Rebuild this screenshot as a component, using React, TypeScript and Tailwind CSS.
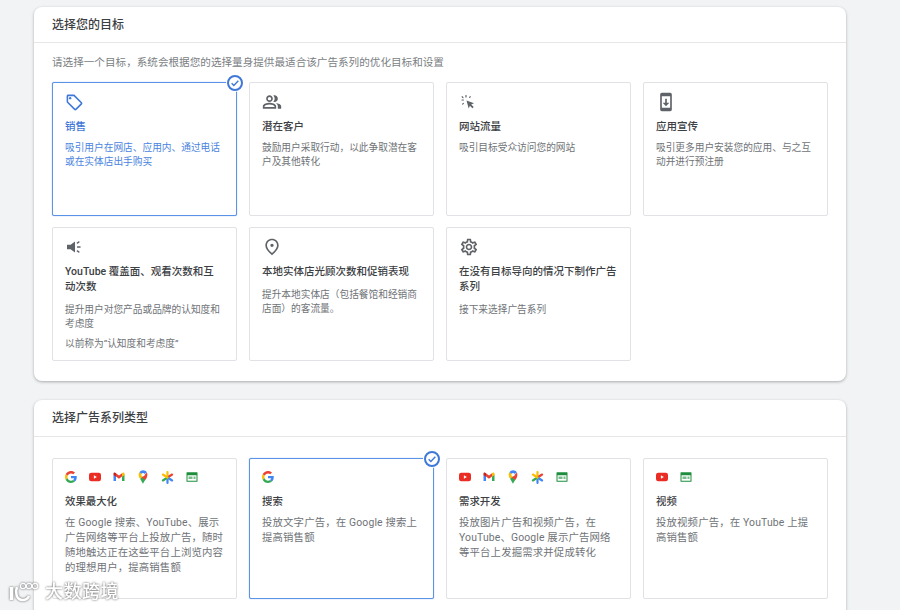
import type { ReactNode } from "react";
import {
  MdOutlineLocalOffer,
  MdOutlinePeopleAlt,
  MdOutlineSystemUpdate,
  MdOutlinePlace,
  MdOutlineSettings,
} from "react-icons/md";

function TrafficIcon() {
  return (
    <svg viewBox="0 0 18 18" className="h-[18px] w-[18px] text-[#5f6368]" fill="currentColor">
      <path d="M7.500 7.500l7.500 2.800-2.800 1.200 2.500 2.500-1.300 1.300-2.500-2.500-1.200 2.800z" />
      <rect x="6.400" y="2" width="1.200" height="2.600" rx="0.600" />
      <rect x="2.400" y="6.400" width="2.600" height="1.200" rx="0.600" />
      <rect x="10.400" y="3" width="1.200" height="2.200" rx="0.600" transform="rotate(35 11 4)" />
      <rect x="3" y="3" width="1.200" height="2.400" rx="0.600" transform="rotate(-45 3.600 4.200)" />
      <rect x="3.400" y="9.600" width="1.200" height="2.200" rx="0.600" transform="rotate(45 4 10.700)" />
    </svg>
  );
}

function CampaignIcon() {
  return (
    <svg viewBox="0 0 18 18" className="h-[18px] w-[18px] text-[#5f6368]" fill="currentColor">
      <path d="M2 6.700h3.600L10 3.500v11L5.600 11.300H2z" />
      <rect x="12" y="8.300" width="3.600" height="1.400" rx="0.500" />
      <rect x="11.500" y="3.900" width="3.200" height="1.300" rx="0.500" transform="rotate(-35 13 4.500)" />
      <rect x="11.500" y="12.800" width="3.200" height="1.300" rx="0.500" transform="rotate(35 13 13.500)" />
    </svg>
  );
}

function GoogleIcon() {
  return (
    <svg viewBox="0 0 48 48" className="h-3 w-3">
      <path fill="#EA4335" d="M24 9.500c3.500 0 6.700 1.200 9.200 3.600l6.900-6.900C35.900 2.400 30.500 0 24 0 14.600 0 6.500 5.400 2.600 13.200l8 6.200C12.500 13.600 17.800 9.500 24 9.500z" />
      <path fill="#4285F4" d="M47 24.500c0-1.600-.1-3.100-.4-4.500H24v9h12.900c-.6 3-2.300 5.500-4.800 7.200l7.700 6c4.500-4.200 7.200-10.300 7.200-17.700z" />
      <path fill="#FBBC05" d="M10.600 28.600c-.5-1.500-.8-3-.8-4.600s.3-3.100.8-4.600l-8-6.200C.9 16.500 0 20.100 0 24s.9 7.500 2.600 10.800l8-6.200z" />
      <path fill="#34A853" d="M24 48c6.500 0 11.900-2.100 15.900-5.800l-7.700-6c-2.200 1.400-4.900 2.300-8.200 2.300-6.200 0-11.500-4.200-13.400-9.900l-8 6.200C6.500 42.600 14.600 48 24 48z" />
    </svg>
  );
}

function YoutubeIcon() {
  return (
    <svg viewBox="0 0 24 24" className="h-3 w-3">
      <rect x="0" y="3.500" width="24" height="17" rx="4.500" fill="#EA2C24" />
      <path d="M9.700 8.500v7l6-3.500z" fill="#fff" />
    </svg>
  );
}

function GmailIcon() {
  return (
    <svg viewBox="0 0 24 24" className="h-3 w-3">
      <path fill="#4285F4" d="M1 20h5V10.500L1 7z" />
      <path fill="#34A853" d="M18 20h5V7l-5 3.500z" />
      <path fill="#EA4335" d="M6 11l6 4.500 6-4.500V4.500l-6 4.500-6-4.500z" />
      <path fill="#C5221F" d="M1 5.500V8l5 3.500V4.500L4.500 3.500C3 2.500 1 3.500 1 5.500z" />
      <path fill="#FBBC04" d="M18 4.500v7L23 8V5.500c0-2-2-3-3.500-2z" />
    </svg>
  );
}

function MapsIcon() {
  return (
    <svg viewBox="4.500 2 15 21.500" className="h-[14px] w-3">
      <path fill="#34A853" d="M7.500 15.500L12 23c1-2.500 2.500-4.500 3.900-6.200L11 12z" />
      <path fill="#FBBC04" d="M5.300 9.200c0 2.500 1 4.300 2.200 6.300L13 9.500 6.500 5.500c-.8 1-1.200 2.300-1.200 3.700z" />
      <path fill="#4285F4" d="M12 2.500c-2.200 0-4.200 1.100-5.500 3l5.500 3.700 6-3.500C16.800 3.700 14.500 2.500 12 2.500z" />
      <path fill="#EA4335" d="M18 5.700L10 14l5.900 2.800c1.500-2 2.800-4.500 2.800-7.600 0-1.300-.3-2.500-.7-3.500z" />
      <circle cx="12" cy="9.200" r="2.500" fill="#fff" />
    </svg>
  );
}

function DiscoverIcon() {
  return (
    <svg viewBox="0 0 24 24" className="h-[13px] w-[13px]" strokeWidth="4" strokeLinecap="round">
      <path d="M12 12V2" stroke="#FBBC04" />
      <path d="M12 12l8.500-5.500" stroke="#EA4335" />
      <path d="M12 12l8.500 5.500" stroke="#4285F4" />
      <path d="M12 12v10" stroke="#4285F4" />
      <path d="M12 12l-8.500 5.500" stroke="#34A853" />
      <path d="M12 12L3.500 6.500" stroke="#FBBC04" />
    </svg>
  );
}

function DisplayIcon() {
  return (
    <svg viewBox="0 0 24 24" className="h-3 w-3" fill="#1E8E3E">
      <path d="M2 2.500h20a1 1 0 011 1v17a1 1 0 01-1 1H2a1 1 0 01-1-1v-17a1 1 0 011-1zm1 6V19.500h18V8.500z" />
      <path d="M5 11h8v5H5zM15 11h4v5h-4z" opacity="0.6" />
    </svg>
  );
}

function CheckBadge() {
  return (
    <span className="absolute -top-[8px] -right-[7px] flex h-4 w-4 items-center justify-center rounded-full border-2 border-[#3f78d8] bg-white ring-1 ring-white">
      <svg viewBox="0 0 12 12" className="h-[10px] w-[10px]" fill="none" stroke="#3f78d8" strokeWidth="1.700">
        <path d="M2 6.400l2.600 2.600L10 3.300" />
      </svg>
    </span>
  );
}

interface ITileProps {
  icon: ReactNode;
  title: string;
  desc: string;
  note?: string;
  selected?: boolean;
  selectedText?: boolean;
  large?: boolean;
  lower?: boolean;
}

function Tile({ icon, title, desc, note, selected, selectedText, large, lower }: ITileProps) {
  return (
    <div
      className={`relative rounded-[2px] border bg-white px-3 ${
        large ? "h-[141px] pt-[8px]" : "h-[134px] pt-[9px]"
      } ${selected ? "border-[#5b93e6] shadow-[0_0_1px_#5b93e6]" : "border-[#e0e2e5]"}`}
    >
      {selected && <CheckBadge />}
      <div className="flex h-[20px] items-center gap-3">{icon}</div>
      <h4
        className={`mt-[6.500px] leading-[15px] font-medium ${large ? "text-[10.400px]" : "text-[10.500px]"} ${
          selectedText ? "text-[#3f78d8]" : "text-[#3c4043]"
        }`}
      >
        {title}
      </h4>
      <p
        className={`${
          large
            ? "mt-[6px] text-[10.400px] leading-[15px] tracking-[0.15px]"
            : lower
              ? "mt-[9px] text-[9.700px] leading-[14px]"
              : "mt-[7.500px] text-[9.700px] leading-[14px]"
        } ${selectedText ? "text-[#4a84e0]" : "text-[#6f7377]"}`}
      >
        {desc}
      </p>
      {note && <p className="mt-[6px] text-[9.700px] leading-[14px] text-[#6f7377]">{note}</p>}
    </div>
  );
}

const glyph = "text-[20px] text-[#5f6368]";

export default function App() {
  return (
    <div
      className="relative h-[610px] w-[900px] overflow-hidden bg-[#f1f3f4] pt-[7px] pl-[34px]"
      style={{ fontFamily: '"Roboto", "Noto Sans CJK SC", sans-serif' }}
    >
      <section className="h-[374px] w-[812px] rounded-lg bg-white shadow-[0_1px_3px_rgba(60,64,67,0.4)]">
        <h2 className="flex h-[36px] items-center border-b border-[#e4e6e8] pl-[18px] text-[12px] font-medium text-[#3c4043]">
          选择您的目标
        </h2>
        <div className="px-[18px] pt-[12px]">
          <p className="text-[10.600px] leading-[16px] text-[#7a7e82]">
            请选择一个目标，系统会根据您的选择量身提供最适合该广告系列的优化目标和设置
          </p>
          <div className="mt-[11px] grid w-[776px] grid-cols-4 gap-x-3 gap-y-[11px]">
            <Tile
              selected
              selectedText
              icon={<MdOutlineLocalOffer className="text-[19px] text-[#3f78d8]" />}
              title="销售"
              desc="吸引用户在网店、应用内、通过电话或在实体店出手购买"
            />
            <Tile
              icon={<MdOutlinePeopleAlt className={glyph} />}
              title="潜在客户"
              desc="鼓励用户采取行动，以此争取潜在客户及其他转化"
            />
            <Tile icon={<TrafficIcon />} title="网站流量" desc="吸引目标受众访问您的网站" />
            <Tile
              icon={<MdOutlineSystemUpdate className={glyph} />}
              title="应用宣传"
              desc="吸引更多用户安装您的应用、与之互动并进行预注册"
            />
            <Tile
              lower
              icon={<CampaignIcon />}
              title="YouTube 覆盖面、观看次数和互动次数"
              desc="提升用户对您产品或品牌的认知度和考虑度"
              note="以前称为“认知度和考虑度”"
            />
            <Tile
              lower
              icon={<MdOutlinePlace className={glyph} />}
              title="本地实体店光顾次数和促销表现"
              desc="提升本地实体店（包括餐馆和经销商店面）的客流量。"
            />
            <Tile
              lower
              icon={<MdOutlineSettings className={glyph} />}
              title="在没有目标导向的情况下制作广告系列"
              desc="接下来选择广告系列"
            />
          </div>
        </div>
      </section>

      <section className="mt-[19px] h-[260px] w-[812px] rounded-lg bg-white shadow-[0_1px_3px_rgba(60,64,67,0.4)]">
        <h2 className="flex h-[37px] items-center border-b border-[#e4e6e8] pl-[18px] text-[12px] font-medium text-[#3c4043]">
          选择广告系列类型
        </h2>
        <div className="grid w-[812px] grid-cols-4 gap-x-3 px-[18px] pt-[21px]">
          <Tile
            large
            icon={
              <>
                <GoogleIcon />
                <YoutubeIcon />
                <GmailIcon />
                <MapsIcon />
                <DiscoverIcon />
                <DisplayIcon />
              </>
            }
            title="效果最大化"
            desc="在 Google 搜索、YouTube、展示广告网络等平台上投放广告，随时随地触达正在这些平台上浏览内容的理想用户，提高销售额"
          />
          <Tile
            large
            selected
            icon={<GoogleIcon />}
            title="搜索"
            desc="投放文字广告，在 Google 搜索上提高销售额"
          />
          <Tile
            large
            icon={
              <>
                <YoutubeIcon />
                <GmailIcon />
                <MapsIcon />
                <DiscoverIcon />
                <DisplayIcon />
              </>
            }
            title="需求开发"
            desc="投放图片广告和视频广告，在 YouTube、Google 展示广告网络等平台上发掘需求并促成转化"
          />
          <Tile
            large
            icon={
              <>
                <YoutubeIcon />
                <DisplayIcon />
              </>
            }
            title="视频"
            desc="投放视频广告，在 YouTube 上提高销售额"
          />
        </div>
      </section>

      <div className="absolute top-[581px] left-[9px] flex items-center gap-[4px] text-white drop-shadow-[0_0_1px_rgba(70,70,70,0.9)]">
        <svg viewBox="0 0 32 22" className="h-[22px] w-[32px]" fill="none" stroke="currentColor">
          <path d="M2.500 6v13" strokeWidth="3.500" />
          <path d="M8 6c-2 5-1 13 6 13 3 0 5-2 6-4" strokeWidth="2.600" />
          <circle cx="14" cy="5" r="2.600" strokeWidth="1.200" />
          <circle cx="20" cy="5" r="2.600" strokeWidth="1.200" />
          <circle cx="26" cy="5" r="2.600" strokeWidth="1.200" />
        </svg>
        <span className="text-[18px] leading-[20px] font-medium tracking-[0.5px]">大数跨境</span>
      </div>
    </div>
  );
}
